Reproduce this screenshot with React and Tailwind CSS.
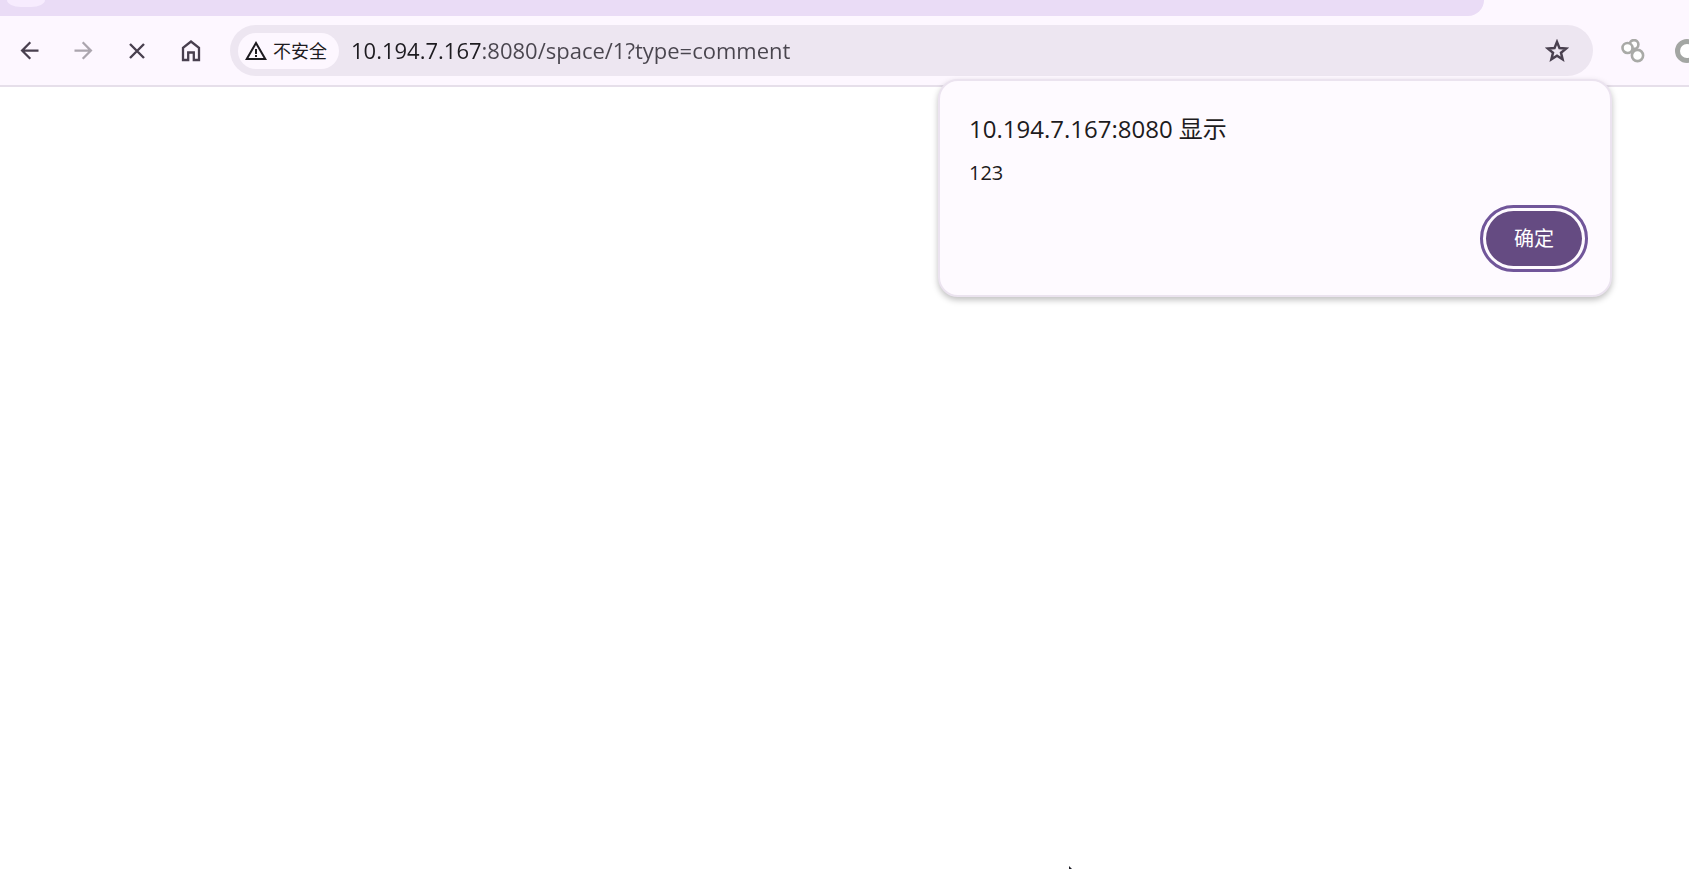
import { useState } from "react";
import { MdArrowBack, MdArrowForward, MdWarningAmber } from "react-icons/md";

const ToolbarButton = ({ label, children, ...props }) => {
	return (
		<button
			aria-label={label}
			className="w-9 h-9 shrink-0 flex items-center justify-center rounded-full text-[#49404f] disabled:text-[#aba5ae]"
			{...props}
		>
			{children}
		</button>
	);
};

const CloseIcon = () => (
	<svg className="w-6 h-6" viewBox="0 0 24 24" fill="none" stroke="currentColor" strokeWidth="2.400">
		<path d="M5 5l14 14M19 5L5 19" />
	</svg>
);

const HomeIcon = () => (
	<svg className="w-6 h-6" viewBox="0 0 24 24" fill="none" stroke="currentColor" strokeWidth="2.300">
		<path d="M4 21V8.800l8-6.300 8 6.300V21h-5.200v-7.500H9.200V21z" />
	</svg>
);

const StarIcon = () => (
	<svg className="w-6 h-6" viewBox="0 0 24 24" fill="none" stroke="currentColor" strokeWidth="2.500">
		<path d="M12 2.900l2.500 6.200 6.600.5-5.100 4.200 1.600 6.500-5.600-3.500-5.600 3.500 1.600-6.500-5.100-4.200 6.600-.5z" />
	</svg>
);

const BubblesIcon = () => (
	<svg className="w-6 h-6" viewBox="0 0 24 24" fill="#fff" stroke="#a9aaa7" strokeWidth="2.600">
		<circle cx="13" cy="5.500" r="4.400" />
		<circle cx="6.500" cy="9" r="5" />
		<circle cx="16.500" cy="16.500" r="5.600" />
	</svg>
);

const RingIcon = () => (
	<svg className="w-6 h-6" viewBox="0 0 24 24" fill="#fff" stroke="#a3a6a3" strokeWidth="5">
		<circle cx="12" cy="12" r="9.500" />
	</svg>
);

const AddressBar = () => {
	const [url, setUrl] = useState("10.194.7.167:8080/space/1?type=comment");

	return (
		<div className="flex-1 min-w-0 h-[51px] ml-[21px] pl-2 pr-6 flex items-center rounded-full bg-[#ede6f1]">
			<button className="h-9 pl-1.5 pr-3 flex shrink-0 items-center gap-[5px] rounded-full bg-[#fdf7ff] text-lg text-[#1d1b20]">
				<MdWarningAmber className="w-6 h-6" />
				不安全
			</button>
			<input
				type="text"
				aria-label="地址"
				spellCheck={false}
				value={url}
				onChange={(e) => setUrl(e.target.value)}
				className="flex-1 min-w-0 h-9 ml-3 pb-0.5 text-[22px] outline-none text-transparent caret-[#1d1b20] bg-clip-text bg-[linear-gradient(90deg,#1d1b20_130px,#49454e_130px)]"
			/>
			<button aria-label="为此标签页添加书签" className="shrink-0 text-[#49404f]">
				<StarIcon />
			</button>
		</div>
	);
};

const AlertDialog = ({ origin, message, onClose }) => {
	return (
		<div
			role="alertdialog"
			aria-labelledby="alert-title"
			aria-describedby="alert-message"
			className="absolute top-[79px] right-[77px] w-[674px] pt-7 pb-[29px] pl-[29px] pr-7 rounded-[20px] border-2 border-[#ebe3ef] bg-[#fefaff] text-[#1d1b20] shadow-[0_3px_6px_rgba(0,0,0,0.25)]"
		>
			<h1 id="alert-title" className="text-2xl leading-10">
				{origin} 显示
			</h1>
			<p id="alert-message" className="mt-1 text-xl leading-10">
				{message}
			</p>
			<div className="mt-[18px] flex justify-end">
				<button
					onClick={onClose}
					className="w-24 h-[55px] rounded-full bg-[#654b82] text-white text-xl outline-3 outline-offset-3 outline-[#71569a]"
				>
					确定
				</button>
			</div>
		</div>
	);
};

const App = () => {
	const [open, setOpen] = useState(true);

	return (
		<div className="relative min-h-screen overflow-hidden bg-white font-['Open_Sans','Noto_Sans_CJK_SC',sans-serif]">
			<header className="bg-[#fdf7ff] border-b-2 border-[#e6dfea]">
				<div className="h-4 mr-[205px] pl-[7px] rounded-br-2xl bg-[#eadcf6]">
					<div className="w-[38px] h-[7px] rounded-[0_0_14px_14px/0_0_7px_7px] bg-[#f7ecfe]" />
				</div>
				<div className="h-[69px] pl-[11px] flex items-center">
					<nav className="flex gap-[18px]">
						<ToolbarButton label="返回">
							<MdArrowBack className="w-[27px] h-[27px]" />
						</ToolbarButton>
						<ToolbarButton label="前进" disabled>
							<MdArrowForward className="w-[27px] h-[27px]" />
						</ToolbarButton>
						<ToolbarButton label="停止">
							<CloseIcon />
						</ToolbarButton>
						<ToolbarButton label="主页">
							<HomeIcon />
						</ToolbarButton>
					</nav>
					<AddressBar />
					<div className="w-24 pl-[22px] shrink-0 flex gap-[18px] overflow-hidden">
						<ToolbarButton label="扩展程序">
							<BubblesIcon />
						</ToolbarButton>
						<ToolbarButton label="扩展">
							<RingIcon />
						</ToolbarButton>
					</div>
				</div>
			</header>
			{open && (
				<AlertDialog
					origin="10.194.7.167:8080"
					message="123"
					onClose={() => setOpen(false)}
				/>
			)}
			{/* tip of the mouse pointer */}
			<svg className="absolute bottom-0 left-[1069px] w-1 h-[3px]" viewBox="0 0 4 3">
				<path d="M0 0l3 3H0z" fill="#1b1b24" />
			</svg>
		</div>
	);
};

export default App;
